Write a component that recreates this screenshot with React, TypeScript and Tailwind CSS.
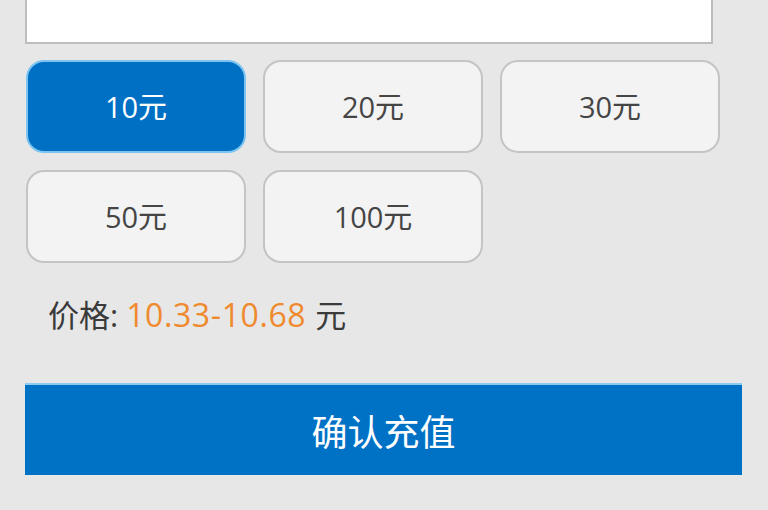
import React from "react";

const amounts = ["10元", "20元", "30元", "50元", "100元"];

export default function App() {
  return (
    <div
      className="w-[768px] h-[510px] overflow-hidden bg-[#e7e7e7] flex flex-col"
      style={{ fontFamily: '"Open Sans", "Noto Sans CJK SC", sans-serif' }}
    >
      <div className="ml-[25px] w-[688px] h-[44px] bg-white border-2 border-t-0 border-[#bdbdbd]" />
      <div className="ml-[26px] mt-[16px] grid grid-cols-[220px_220px_220px] gap-x-[17px] gap-y-[17px]">
        {amounts.map((a, i) => (
          <div
            key={a}
            className={
              i === 0
                ? "h-[93px] rounded-[18px] bg-[#0070c4] border-2 border-[#7cc4f0] flex items-center justify-center text-white text-[29px]"
                : "h-[93px] rounded-[18px] bg-[#f3f3f3] border-2 border-[#c4c4c4] flex items-center justify-center text-[#454545] text-[29px]"
            }
          >
            {a}
          </div>
        ))}
      </div>
      <div className="ml-[48px] mt-[30px] h-[44px] flex items-center text-[31px] text-[#3a3a3a]">
        <span>价格:</span>
        <span className="ml-[8px] text-[#ef8a2e] text-[32px] tracking-[0.6px]">10.33-10.68</span>
        <span className="ml-[9px]">元</span>
      </div>
      <div className="ml-[25px] mt-[46px] w-[717px] h-[92px] pt-[6px] bg-[#0072c6] border-t-2 border-[#8ccaf2] flex items-center justify-center text-white text-[36px]">
        确认充值
      </div>
    </div>
  );
}
